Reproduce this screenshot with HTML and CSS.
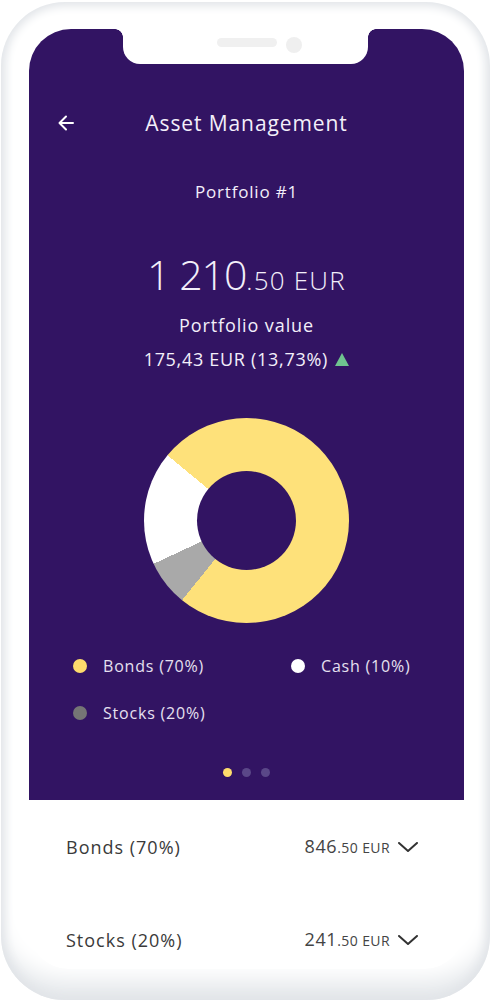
FILE: index.html
```html
<!DOCTYPE html>
<html lang="en">
<head>
    <meta charset="UTF-8">
    <meta name="viewport" content="width=device-width, initial-scale=1.0">
    <title>Asset Management</title>
    <link rel="stylesheet" href="styles.css">
</head>
<body>
    <div class="phone">
        <div class="screen">
            <div class="notch">
                <span class="speaker"></span>
                <span class="camera"></span>
            </div>

            <div class="hero">
                <div class="header">
                    <svg class="back" width="16" height="16" viewBox="0 0 16 16" fill="none" stroke="#fff" stroke-width="2" stroke-linecap="round" stroke-linejoin="round">
                        <path d="M15 8H1.5M8 1.5L1.5 8L8 14.5"/>
                    </svg>
                    <h1>Asset Management</h1>
                    <span></span>
                </div>

                <div class="portfolio-name">Portfolio #1</div>
                <div class="amount">1 210<span class="cents">.50 EUR</span></div>
                <div class="amount-label">Portfolio value</div>
                <div class="change">175,43 EUR (13,73%) <span class="up"></span></div>

                <div class="donut"></div>

                <div class="legend">
                    <div class="legend-item"><span class="dot bonds"></span>Bonds (70%)</div>
                    <div class="legend-item"><span class="dot cash"></span>Cash (10%)</div>
                    <div class="legend-item"><span class="dot stocks"></span>Stocks (20%)</div>
                </div>

                <div class="pager">
                    <span class="active"></span>
                    <span></span>
                    <span></span>
                </div>
            </div>

            <div class="list">
                <div class="row">
                    <span class="row-name">Bonds (70%)</span>
                    <span class="row-value">846<small>.50 EUR</small></span>
                    <svg class="chevron" width="20" height="10" viewBox="0 0 20 10" fill="none" stroke="#333" stroke-width="2" stroke-linecap="round" stroke-linejoin="round">
                        <path d="M1 1L10 9L19 1"/>
                    </svg>
                </div>
                <div class="row">
                    <span class="row-name">Stocks (20%)</span>
                    <span class="row-value">241<small>.50 EUR</small></span>
                    <svg class="chevron" width="20" height="10" viewBox="0 0 20 10" fill="none" stroke="#333" stroke-width="2" stroke-linecap="round" stroke-linejoin="round">
                        <path d="M1 1L10 9L19 1"/>
                    </svg>
                </div>
            </div>
        </div>
    </div>
</body>
</html>
```

FILE: styles.css
```css
html, body {
    margin: 0;
    padding: 0;
    background-color: #fff;
    font-family: "Open Sans", sans-serif;
}

.phone {
    width: 489px;
    height: 998px;
    margin: 2px 0 0 1px;
    padding: 27px 0 0 28px;
    box-sizing: border-box;
    border-radius: 64px;
    background-color: #fff;
    box-shadow: inset 0 0 10px 4px #e1e4e8, inset 0 -28px 22px -8px #e6e9ec;
}

.screen {
    position: relative;
    width: 435px;
    height: 940px;
    border-radius: 42px 42px 40px 40px;
    overflow: hidden;
    background-color: #fff;
}

/* notch on top of the screen */
.notch {
    position: absolute;
    top: 0;
    left: 94px;
    width: 245px;
    height: 35px;
    background-color: #fff;
    border-radius: 0 0 17px 17px;
    z-index: 2;
}

.notch::before,
.notch::after {
    content: "";
    position: absolute;
    top: 0;
    width: 8px;
    height: 8px;
}

.notch::before {
    left: -8px;
    background: radial-gradient(circle at 0 100%, transparent 7.5px, #fff 8px);
}

.notch::after {
    right: -8px;
    background: radial-gradient(circle at 100% 100%, transparent 7.5px, #fff 8px);
}

.speaker {
    position: absolute;
    left: 94px;
    top: 9px;
    width: 60px;
    height: 9px;
    border-radius: 5px;
    background-color: #f0f0f0;
}

.camera {
    position: absolute;
    left: 163px;
    top: 8px;
    width: 16px;
    height: 16px;
    border-radius: 50%;
    background-color: #efefef;
}

.hero {
    height: 771px;
    padding-top: 80px;
    box-sizing: border-box;
    background-color: #321463;
    color: #f3effa;
    text-align: center;
}

.header {
    display: grid;
    grid-template-columns: 1fr auto 1fr;
    align-items: center;
    height: 28px;
}

.back {
    margin-left: 29px;
}

.header h1 {
    margin: 0;
    font-size: 21px;
    font-weight: 400;
    line-height: 28px;
    letter-spacing: 0.9px;
}

.portfolio-name {
    margin-top: 44px;
    font-size: 17px;
    line-height: 22px;
    letter-spacing: 0.8px;
}

.amount {
    margin-top: 47px;
    font-size: 41px;
    font-weight: 300;
    line-height: 48px;
    letter-spacing: -1px;
}

.amount .cents {
    font-size: 26px;
    line-height: 1;
    letter-spacing: 1.2px;
}

.amount-label {
    margin-top: 15px;
    font-size: 18px;
    line-height: 24px;
    letter-spacing: 0.9px;
}

.change {
    margin-top: 10px;
    font-size: 18px;
    line-height: 24px;
    letter-spacing: 0.7px;
}

.up {
    display: inline-block;
    margin-left: 2px;
    width: 0;
    height: 0;
    border-left: 7px solid transparent;
    border-right: 7px solid transparent;
    border-bottom: 13px solid #6fc48f;
}

.donut {
    position: relative;
    width: 205px;
    height: 205px;
    margin: 47px auto 0;
    border-radius: 50%;
    background: conic-gradient(#fee17a 0deg 219deg, #a9a9a9 219deg 245deg, #fff 245deg 309.5deg, #fee17a 309.5deg 360deg);
}

.donut::after {
    content: "";
    position: absolute;
    top: 53px;
    left: 53px;
    width: 99px;
    height: 99px;
    border-radius: 50%;
    background-color: #321463;
}

.legend {
    display: grid;
    grid-template-columns: 218px auto;
    row-gap: 25px;
    margin-top: 32px;
    padding-left: 44px;
    text-align: left;
    color: #e6e0f0;
}

.legend-item {
    display: flex;
    align-items: center;
    font-size: 16px;
    line-height: 22px;
    letter-spacing: 0.8px;
}

.dot {
    width: 14px;
    height: 14px;
    margin-right: 16px;
    border-radius: 50%;
}

.dot.bonds {
    background-color: #fedc6c;
}

.dot.cash {
    background-color: #fff;
}

.dot.stocks {
    background-color: #757575;
}

.pager {
    display: flex;
    justify-content: center;
    gap: 10px;
    margin-top: 44px;
}

.pager span {
    width: 9px;
    height: 9px;
    border-radius: 50%;
    background-color: #5a4788;
}

.pager .active {
    background-color: #fedc6c;
}

.list {
    padding: 35px 46px 0 37px;
}

.row {
    display: flex;
    align-items: center;
    height: 24px;
    margin-bottom: 69px;
    color: #3a3a3a;
}

.row-name {
    flex: 1;
    font-size: 18px;
    line-height: 24px;
    letter-spacing: 1px;
}

.row-value {
    font-size: 18px;
    line-height: 24px;
    letter-spacing: 0.6px;
    color: #444;
}

.row-value small {
    font-size: 14px;
    letter-spacing: 0.4px;
}

.chevron {
    margin-left: 8px;
}
```
